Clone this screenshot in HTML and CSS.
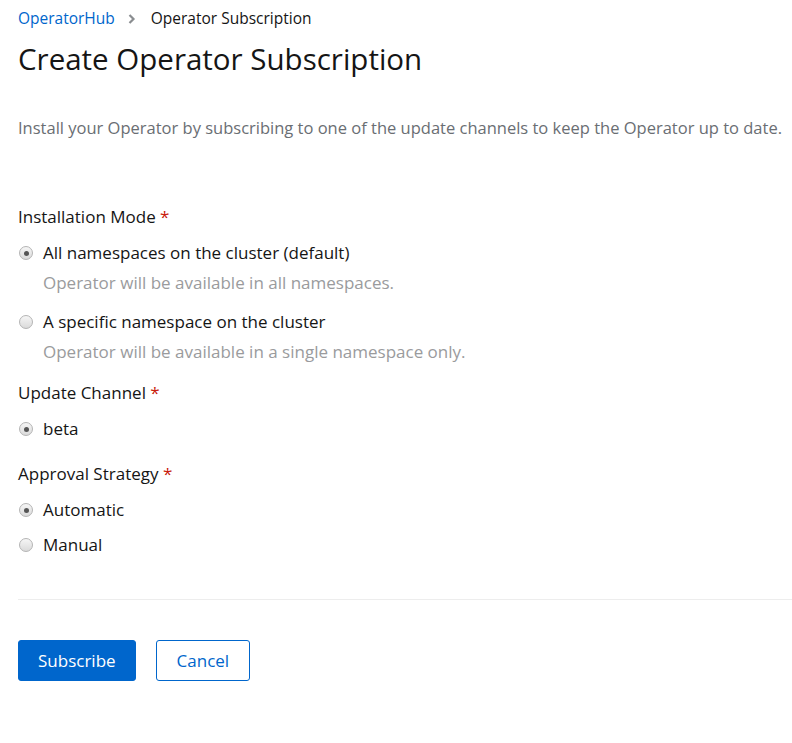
FILE: index.html
```html
<!DOCTYPE html>
<html>
<head>
<meta charset="utf-8">
<link rel="stylesheet" href="styles.css">
</head>
<body>
<div class="page">
  <nav class="breadcrumb">
    <a class="crumb-link">OperatorHub</a>
    <svg class="chev" width="8" height="10" viewBox="0 0 8 10"><path d="M1.5 1 L5.5 5 L1.5 9" fill="none" stroke="#8a8d90" stroke-width="2.2"/></svg>
    <span class="crumb-current">Operator Subscription</span>
  </nav>
  <h1 class="title">Create Operator Subscription</h1>
  <p class="desc">Install your Operator by subscribing to one of the update channels to keep the Operator up to date.</p>

  <div class="group group-first">
    <div class="label">Installation Mode <span class="req">*</span></div>
    <div class="option">
      <span class="radio checked"></span>
      <div class="opt-text">
        <div class="opt-label">All namespaces on the cluster (default)</div>
        <div class="opt-help">Operator will be available in all namespaces.</div>
      </div>
    </div>
    <div class="option">
      <span class="radio"></span>
      <div class="opt-text">
        <div class="opt-label">A specific namespace on the cluster</div>
        <div class="opt-help">Operator will be available in a single namespace only.</div>
      </div>
    </div>
  </div>

  <div class="group group-channel">
    <div class="label">Update Channel <span class="req">*</span></div>
    <div class="option">
      <span class="radio checked"></span>
      <div class="opt-text"><div class="opt-label">beta</div></div>
    </div>
  </div>

  <div class="group group-approval">
    <div class="label">Approval Strategy <span class="req">*</span></div>
    <div class="option">
      <span class="radio checked"></span>
      <div class="opt-text"><div class="opt-label">Automatic</div></div>
    </div>
    <div class="option option-tight">
      <span class="radio"></span>
      <div class="opt-text"><div class="opt-label">Manual</div></div>
    </div>
  </div>

  <hr class="sep">
  <div class="actions">
    <button class="btn btn-primary">Subscribe</button>
    <button class="btn btn-secondary">Cancel</button>
  </div>
</div>
</body>
</html>
```

FILE: styles.css
```css
html, body {
  margin: 0;
  padding: 0;
  background: #fff;
  overflow: hidden;
}
body {
  font-family: "Open Sans", "Noto Sans", sans-serif;
  color: #151515;
  width: 792px;
}
.page {
  padding: 8px 0 0 18px;
  white-space: nowrap;
}
.breadcrumb {
  display: flex;
  align-items: center;
  font-size: 15.5px;
  line-height: 21px;
  height: 21px;
}
.crumb-link { color: #0066cc; }
.chev { margin: 0 15px 0 13px; }
.crumb-current { color: #151515; }
.title {
  font-size: 29.5px;
  font-weight: 400;
  margin: 12px 0 0 0;
  line-height: 36px;
  color: #151515;
}
.desc {
  margin: 39px 0 0 0;
  font-size: 16.5px;
  line-height: 24px;
  color: #6a6e73;
}
.group-first { margin-top: 65px; }
.group-channel { margin-top: 14px; }
.group-approval { margin-top: 21px; }
.label {
  font-size: 17px;
  line-height: 24px;
  font-weight: 500;
}
.req { color: #c9190b; }
.option {
  display: flex;
  align-items: flex-start;
  margin-top: 12px;
}
.option-tight { margin-top: 11px; }
.opt-text { margin-left: 10px; }
.opt-label { font-size: 17px; line-height: 24px; }
.opt-help { font-size: 17px; line-height: 24px; color: #9a9b9d; margin-top: 6px; margin-bottom: 3px; }
.radio {
  width: 14px;
  height: 14px;
  border-radius: 50%;
  border: 1px solid #b4b4b4;
  background: linear-gradient(#f6f6f6, #dadada);
  margin: 5px 0 0 1px;
  flex: none;
  position: relative;
  box-sizing: border-box;
}
.radio.checked::after {
  content: "";
  position: absolute;
  left: 3.5px;
  top: 3.5px;
  width: 5px;
  height: 5px;
  border-radius: 50%;
  background: #555;
}
.sep {
  border: 0;
  border-top: 1px solid #ededed;
  margin: 42px 0 0 0;
}
.actions {
  display: flex;
  gap: 20px;
  margin-top: 40px;
}
.btn {
  font-family: inherit;
  font-size: 17px;
  line-height: 24px;
  padding: 8px 20px;
  border-radius: 3px;
  height: 41px;
  cursor: pointer;
}
.btn-primary {
  background: #0066cc;
  color: #fff;
  border: 1px solid #0066cc;
  padding: 8px 19px;
}
.btn-secondary {
  background: #fff;
  color: #0066cc;
  border: 1px solid #0066cc;
}
```
